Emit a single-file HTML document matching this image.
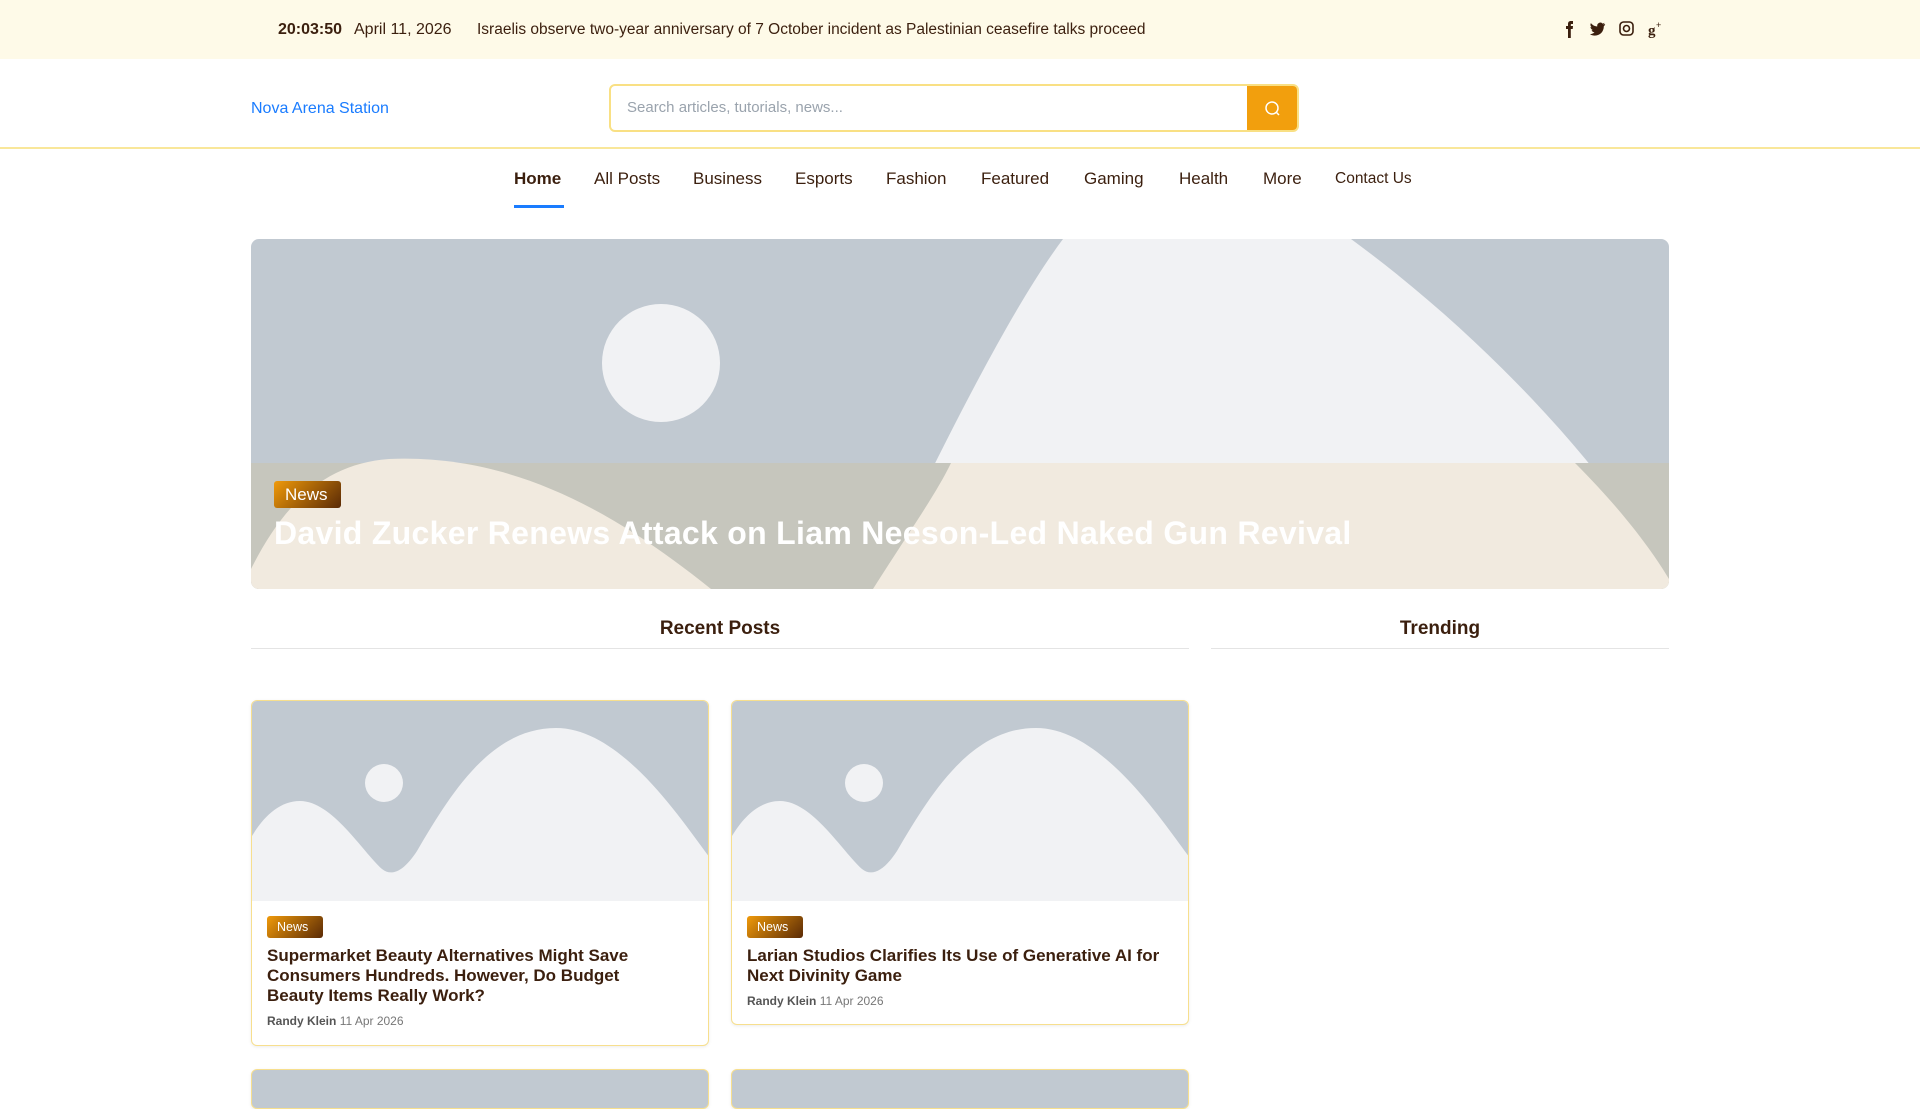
<!DOCTYPE html>
<html><head><meta charset="utf-8"><style>
*{margin:0;padding:0;box-sizing:border-box}
body{width:1920px;height:1080px;overflow:hidden;background:#fff;font-family:"Liberation Sans",sans-serif;color:#3b1f0e;position:relative}
.top{position:absolute;left:0;top:0;width:1920px;height:59px;background:#fefae8}
.top span{position:absolute;top:21px;font-size:16px}
.hdr{position:absolute;top:59px;left:0;width:1920px;height:90px;border-bottom:2px solid #f9e79a}
.logo{position:absolute;left:251px;top:41px;color:#1a7cff;font-size:16px}
.search{position:absolute;left:609px;top:25px;width:690px;height:48px;border:2px solid #f9e084;border-radius:6px;overflow:hidden}
.search span{position:absolute;left:16px;top:13px;color:#9aa3ad;font-size:15px}
.search .btn{position:absolute;right:0;top:0;width:50px;height:44px;background:#f29f0d}
.nav{position:absolute;top:169px;font-size:17px}
.nav span{position:absolute;white-space:nowrap}
.ul{position:absolute;left:514px;top:205px;width:50px;height:3px;background:#1a7cff}
.hero{position:absolute;left:251px;top:239px;width:1418px;height:350px;border-radius:8px;overflow:hidden}
.tag{position:absolute;background:linear-gradient(135deg,#f09a0a,#5a2a06);color:#fff;border-radius:3px}
.htitle{position:absolute;left:23px;top:276px;color:#fff;font-size:32px;font-weight:bold;white-space:nowrap;letter-spacing:.3px}
.sec{position:absolute;top:618px;font-size:19px;font-weight:bold;text-align:center;border-bottom:1px solid #e4e4e4;height:31px}
.card{position:absolute;width:458px;border:1px solid #f7df8e;border-radius:6px;overflow:hidden;background:#fff;box-shadow:0 1px 3px rgba(0,0,0,.08)}
.card .t{position:absolute;left:15px;top:245px;font-size:17px;font-weight:bold;line-height:20px;width:405px}
.card .a{position:absolute;left:15px;font-size:12px;color:#777}
.card .a b{color:#555}
</style></head><body>
<div class="top">
<span style="left:278px;font-weight:bold">20:03:50</span>
<span style="left:354px">April 11, 2026</span>
<span style="left:477px;font-size:15.5px">Israelis observe two-year anniversary of 7 October incident as Palestinian ceasefire talks proceed</span>
<svg style="position:absolute;left:1560px;top:18px" width="104" height="22" viewBox="0 0 104 22" fill="#3b1f0e">
<path d="M8 20V11H6V8h2V6c0-2 1-3 3-3h2v3h-1.5c-.5 0-.7.3-.7.8V8h2.2l-.3 3H10.8v9z"/>
<path d="M45 6c-.6.3-1.2.4-1.8.5.7-.4 1.1-1 1.4-1.7-.6.4-1.300.6-2 .8a3.1 3.1 0 0 0-5.3 2.8c-2.6-.1-4.9-1.4-6.4-3.3-.9 1.5-.4 3.3 1 4.2-.5 0-1-.2-1.4-.4 0 1.5 1.1 2.8 2.5 3.1-.5.1-.9.2-1.4.1.4 1.3 1.6 2.2 2.9 2.2A6.3 6.3 0 0 1 30 16.2c1.4.9 3 1.4 4.8 1.4 5.8 0 9-4.8 9-9v-.4c.5-.4 1-.9 1.3-1.3z"/>
<rect x="60" y="4" width="13" height="13" rx="3.5" fill="none" stroke="#3b1f0e" stroke-width="1.6"/><circle cx="66.5" cy="10.5" r="3" fill="none" stroke="#3b1f0e" stroke-width="1.6"/>
<text x="88" y="17" font-size="15" font-family="Liberation Serif" font-weight="bold">g</text><text x="96" y="10" font-size="9">+</text>
</svg>
</div>
<div class="hdr">
<div class="logo">Nova Arena Station</div>
<div class="search"><span>Search articles, tutorials, news...</span><div class="btn"><svg width="50" height="44"><circle cx="25" cy="22" r="6" fill="none" stroke="#fff" stroke-width="1.5"/><path d="M29 26l3 3" stroke="#fff" stroke-width="1.5"/></svg></div></div>
</div>
<div class="nav">
<span style="left:514px;font-weight:bold">Home</span>
<span style="left:594px">All Posts</span>
<span style="left:693px">Business</span>
<span style="left:795px">Esports</span>
<span style="left:886px">Fashion</span>
<span style="left:981px">Featured</span>
<span style="left:1084px">Gaming</span>
<span style="left:1179px">Health</span>
<span style="left:1263px">More</span>
<span style="left:1335px;font-size:15.5px;top:1px">Contact Us</span>
</div>
<div class="ul"></div>
<div class="hero">
<svg width="1418" height="350" viewBox="0 0 1418 350">
<rect width="1418" height="350" fill="#c1c9d1"/>
<path d="M622 350 C 700 190 760 70 812 0 L1100 0 C 1250 110 1370 250 1418 340 L1418 350Z" fill="#f1f2f4"/>
<circle cx="410" cy="124" r="59" fill="#f1f2f4"/>
<rect y="224" width="1418" height="126" fill="#c6c6bd"/>
<path d="M0 330 C 30 270 70 225 138 220 C 260 215 360 270 460 350 L0 350 Z" fill="#f1eadf"/>
<path d="M622 350 C 660 290 685 255 700 224 L1324 224 C 1370 270 1400 310 1418 340 L1418 350Z" fill="#f1eadf"/>
</svg>
<div class="tag" style="left:23px;top:242px;width:67px;height:27px;font-size:17px;padding:4px 0 0 11px">News</div>
<div class="htitle">David Zucker Renews Attack on Liam Neeson-Led Naked Gun Revival</div>
</div>
<div class="sec" style="left:251px;width:938px">Recent Posts</div>
<div class="sec" style="left:1211px;width:458px">Trending</div>
<div class="card" style="left:251px;top:700px;height:346px">
<svg width="458" height="200"><rect width="458" height="200" fill="#c1c9d1"/><path d="M0 135 C 12 115 28 100 48 100 C 80 100 110 150 130 168 C 140 176 152 170 165 150 C 200 90 240 27 304 27 C 370 27 430 120 458 157 L458 200 L0 200Z" fill="#f1f2f4"/><circle cx="132" cy="82" r="19" fill="#f1f2f4"/></svg>
<div class="tag" style="left:15px;top:215px;width:56px;height:22px;font-size:12.5px;padding:4px 0 0 10px">News</div>
<div class="t">Supermarket Beauty Alternatives Might Save Consumers Hundreds. However, Do Budget Beauty Items Really Work?</div>
<div class="a" style="top:313px"><b>Randy Klein</b> 11 Apr 2026</div>
</div>
<div class="card" style="left:731px;top:700px;height:325px">
<svg width="458" height="200"><rect width="458" height="200" fill="#c1c9d1"/><path d="M0 135 C 12 115 28 100 48 100 C 80 100 110 150 130 168 C 140 176 152 170 165 150 C 200 90 240 27 304 27 C 370 27 430 120 458 157 L458 200 L0 200Z" fill="#f1f2f4"/><circle cx="132" cy="82" r="19" fill="#f1f2f4"/></svg>
<div class="tag" style="left:15px;top:215px;width:56px;height:22px;font-size:12.5px;padding:4px 0 0 10px">News</div>
<div class="t" style="width:430px">Larian Studios Clarifies Its Use of Generative AI for Next Divinity Game</div>
<div class="a" style="top:293px"><b>Randy Klein</b> 11 Apr 2026</div>
</div>
<div class="card" style="left:251px;top:1069px;height:40px;background:#c1c9d1"></div>
<div class="card" style="left:731px;top:1069px;height:40px;background:#c1c9d1"></div>
</body></html>
